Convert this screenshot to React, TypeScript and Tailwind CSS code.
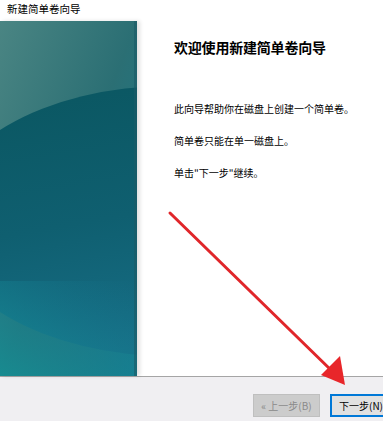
import React from "react";

const font = { fontFamily: '"Noto Sans CJK SC", "Noto Sans", sans-serif' };

function Banner() {
  return (
    <svg width="137" height="355" viewBox="0 0 137 355" className="block">
      <defs>
        <linearGradient id="bg" x1="0" y1="0" x2="1" y2="1">
          <stop offset="0" stopColor="#4a8583" />
          <stop offset="0.5" stopColor="#2b6f74" />
          <stop offset="1" stopColor="#167c8f" />
        </linearGradient>
        <linearGradient id="disc" x1="0" y1="0" x2="0.3" y2="1">
          <stop offset="0" stopColor="#0a5660" />
          <stop offset="0.55" stopColor="#0f5f70" />
          <stop offset="1" stopColor="#176e86" />
        </linearGradient>
        <linearGradient id="low" x1="0" y1="1" x2="1" y2="0">
          <stop offset="0" stopColor="#149095" stopOpacity="0.85" />
          <stop offset="1" stopColor="#167590" stopOpacity="0" />
        </linearGradient>
      </defs>
      <rect width="137" height="355" fill="url(#bg)" />
      <ellipse cx="170" cy="200" rx="230" ry="135" fill="url(#disc)" />
      <rect x="0" y="260" width="137" height="95" fill="url(#low)" />
      <rect x="134" y="0" width="3" height="355" fill="#1b5a66" opacity="0.6" />
    </svg>
  );
}

export default function App() {
  return (
    <div className="relative w-[383px] h-[421px] overflow-hidden bg-white text-black" style={font}>
      <div className="h-[21px] pl-[7px] pt-[2px] text-[10.5px] leading-[14px]">新建简单卷向导</div>

      <div className="flex h-[355px]">
        <div className="shrink-0 shadow-[3px_0_4px_rgba(0,0,0,0.12)]">
          <Banner />
        </div>
        <div className="pl-[37px] pt-[18px]">
          <h1 className="text-[14px] font-bold leading-[16px] tracking-[-0.2px]">欢迎使用新建简单卷向导</h1>
          <div className="mt-[48px] flex flex-col gap-[20px] text-[10px] leading-[12px]">
            <p>此向导帮助你在磁盘上创建一个简单卷。</p>
            <p>简单卷只能在单一磁盘上。</p>
            <p>单击"下一步"继续。</p>
          </div>
        </div>
      </div>

      <div className="h-[45px] border-t border-[#a5a5a5] bg-[#f0eff2] flex items-start pl-[253px] pt-[17px] gap-[10px]">
        <div className="w-[67px] h-[23px] shrink-0 bg-[#cccccc] border border-[#bfbfbf] flex items-center justify-center text-[10px] text-[#8a8a8a]">
          « 上一步(B)
        </div>
        <div className="w-[72px] h-[23px] shrink-0 bg-[#e1e1e1] border-2 border-[#0078d7] flex items-center pl-[7px] text-[10px]">
          下一步(N)
        </div>
      </div>

      <svg className="absolute left-0 top-0 pointer-events-none" width="383" height="421">
        <line x1="170" y1="213" x2="333" y2="372" stroke="#e0262a" strokeWidth="3" strokeLinecap="round" />
        <polygon points="321,375 340,356 345,385" fill="#e8262a" />
      </svg>
    </div>
  );
}
